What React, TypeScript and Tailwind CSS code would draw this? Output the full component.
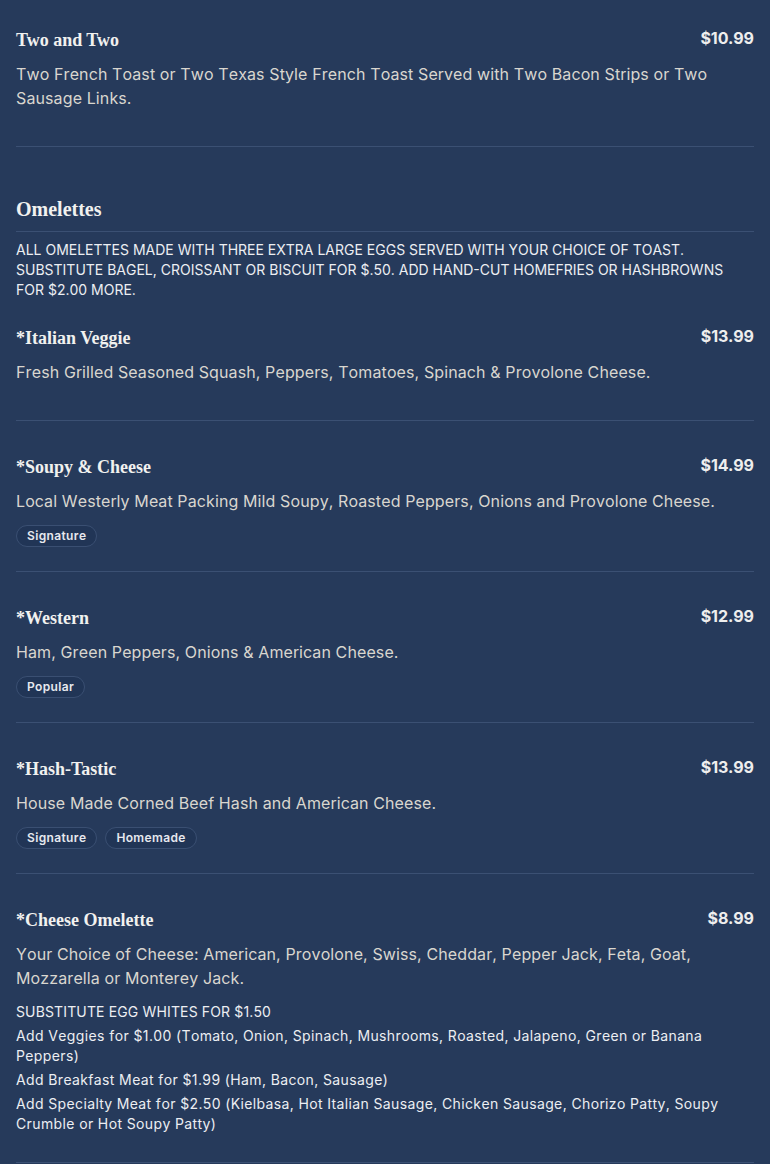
import React from "react";

const serif = { fontFamily: '"Liberation Serif", "Times New Roman", serif' };

type Item = {
  name: string;
  price: string;
  desc: string;
  badges?: string[];
  notes?: string[];
};

function Badge({ label }: { label: string }) {
  return (
    <span className="inline-flex h-[22px] items-center rounded-full border border-[#3a4f72] bg-[#213556] px-[10px] text-[12px] font-semibold leading-none tracking-[0.03em] text-[#e6e8ee] [font-kerning:none]">
      {label}
    </span>
  );
}

function MenuItem({ item, pt }: { item: Item; pt: string }) {
  return (
    <div className={`border-b border-[#3b5073] pb-6 ${pt}`}>
      <div className="flex items-start justify-between">
        <h3 className="text-[18px] font-bold leading-[28px] text-[#f1f1ef]" style={serif}>
          {item.name}
        </h3>
        <span className="text-[16px] font-bold leading-[24px] text-[#eeeeee]">{item.price}</span>
      </div>
      <p className="mt-2 mb-3 text-[16px] leading-[24px] tracking-[0.007em] text-[#d9d6cf] [font-kerning:none]">
        {item.desc}
      </p>
      {item.badges && (
        <div className="flex gap-2">
          {item.badges.map((b) => (
            <Badge key={b} label={b} />
          ))}
        </div>
      )}
      {item.notes && (
        <div className="flex flex-col">
          {item.notes.map((n, i) => (
            <p
              key={n}
              className={`mb-1 text-[14px] leading-[20px] text-[#eceef2] [font-kerning:none] ${
                i === 0 ? "tracking-[0.01em]" : "tracking-[0.027em]"
              }`}
            >
              {n}
            </p>
          ))}
        </div>
      )}
    </div>
  );
}

const omelettes: Item[] = [
  {
    name: "*Soupy & Cheese",
    price: "$14.99",
    desc: "Local Westerly Meat Packing Mild Soupy, Roasted Peppers, Onions and Provolone Cheese.",
    badges: ["Signature"],
  },
  {
    name: "*Western",
    price: "$12.99",
    desc: "Ham, Green Peppers, Onions & American Cheese.",
    badges: ["Popular"],
  },
  {
    name: "*Hash-Tastic",
    price: "$13.99",
    desc: "House Made Corned Beef Hash and American Cheese.",
    badges: ["Signature", "Homemade"],
  },
  {
    name: "*Cheese Omelette",
    price: "$8.99",
    desc: "Your Choice of Cheese: American, Provolone, Swiss, Cheddar, Pepper Jack, Feta, Goat, Mozzarella or Monterey Jack.",
    notes: [
      "SUBSTITUTE EGG WHITES FOR $1.50",
      "Add Veggies for $1.00 (Tomato, Onion, Spinach, Mushrooms, Roasted, Jalapeno, Green or Banana Peppers)",
      "Add Breakfast Meat for $1.99 (Ham, Bacon, Sausage)",
      "Add Specialty Meat for $2.50 (Kielbasa, Hot Italian Sausage, Chicken Sausage, Chorizo Patty, Soupy Crumble or Hot Soupy Patty)",
    ],
  },
];

export default function App() {
  return (
    <div
      className="min-h-[1164px] w-full bg-[#263a5b] px-4"
      style={{ fontFamily: 'Inter, "Noto Sans", Arial, sans-serif' }}
    >
      <MenuItem
        pt="pt-[26px]"
        item={{
          name: "Two and Two",
          price: "$10.99",
          desc: "Two French Toast or Two Texas Style French Toast Served with Two Bacon Strips or Two Sausage Links.",
        }}
      />
      <div className="mt-[48px]">
        <h2 className="border-b border-[#3b5073] pb-2 text-[20px] font-bold leading-[28px] text-[#f1f1ef]" style={serif}>
          Omelettes
        </h2>
        <p className="mt-2 text-[14px] leading-[20px] text-[#eceef2] [font-kerning:none]">
          ALL OMELETTES MADE WITH THREE EXTRA LARGE EGGS SERVED WITH YOUR CHOICE OF TOAST. SUBSTITUTE BAGEL, CROISSANT OR BISCUIT FOR $.50. ADD HAND-CUT HOMEFRIES OR HASHBROWNS FOR $2.00 MORE.
        </p>
        <MenuItem
          pt="pt-[24px]"
          item={{
            name: "*Italian Veggie",
            price: "$13.99",
            desc: "Fresh Grilled Seasoned Squash, Peppers, Tomatoes, Spinach & Provolone Cheese.",
          }}
        />
        {omelettes.map((it) => (
          <MenuItem key={it.name} item={it} pt="pt-8" />
        ))}
      </div>
    </div>
  );
}
